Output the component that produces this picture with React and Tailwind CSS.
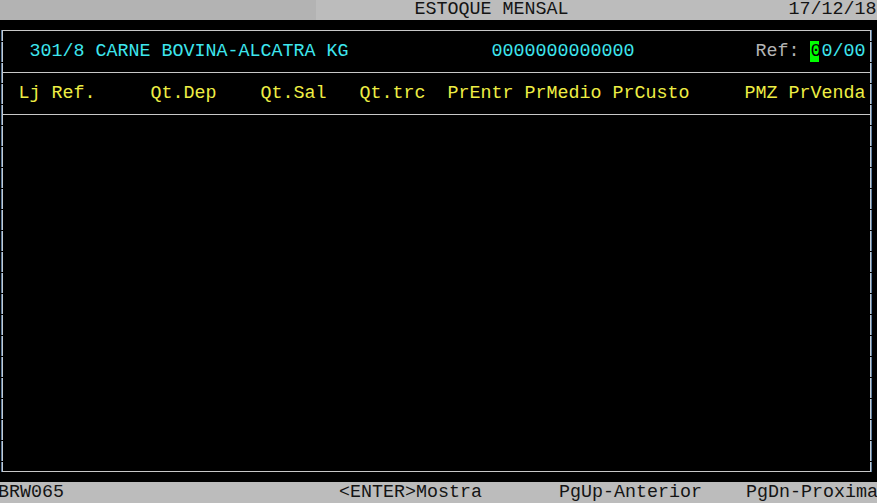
import React from "react";

// one terminal text row: parts are [column, text, className]
function Line({ parts, className = "" }) {
  let pos = 0;
  const out = [];
  parts.forEach(([col, text, cls], i) => {
    if (col > pos) out.push(" ".repeat(col - pos));
    out.push(
      <span key={i} className={cls}>
        {text}
      </span>
    );
    pos = col + text.length;
  });
  return <div className={`whitespace-pre h-[21px] leading-[21px] ${className}`}>{out}</div>;
}

const cyan = "text-[#3ee6ee]";
const yellow = "text-[#eeee44]";

const headers = [
  [2, "Lj Ref."],
  [14, "Qt.Dep"],
  [24, "Qt.Sal"],
  [33, "Qt.trc"],
  [41, "PrEntr"],
  [48, "PrMedio"],
  [56, "PrCusto"],
  [68, "PMZ"],
  [72, "PrVenda"],
];

export default function App() {
  return (
    <div className="h-[503px] w-[877px] overflow-hidden bg-black font-['Liberation_Mono','Courier_New',monospace] text-[18.33px]">
      {/* title bar */}
      <div className="h-[20px] bg-[linear-gradient(to_right,#b3b3b3_316px,#bcbcbc_316px)] text-[#141414] overflow-hidden">
        <Line
          className="-mt-[1px] -ml-[3.5px]"
          parts={[
            [38, "ESTOQUE MENSAL"],
            [72, "17/12/18"],
          ]}
        />
      </div>

      {/* main area */}
      <div className="h-[462px] pt-[10px]">
        <div className="ml-[1px] w-[871px] h-[442px] flex">
          <div className="w-[2px] bg-[linear-gradient(to_right,#5d7b9b_1px,#c4ccd4_1px)]">
            <div className="h-full bg-[image:repeating-linear-gradient(to_bottom,transparent_0px,transparent_11px,#000_11px,#000_12px,transparent_12px,transparent_21px)]" />
          </div>
          <div className="flex-1 flex flex-col border-t border-b border-[#c8c8c8] overflow-hidden">
            <Line
              className="mt-[10px] -ml-[6.5px]"
              parts={[
                [3, "301/8 CARNE BOVINA-ALCATRA KG", cyan],
                [45, "0000000000000", cyan],
                [69, "Ref: ", "text-[#b4b4b4]"],
                [74, "0", "text-black bg-[linear-gradient(to_right,transparent_0.5px,#00ff00_0.5px,#00ff00_9px,transparent_9px)]"],
                [75, "0/00", cyan],
              ]}
            />
            <div className="mt-[10px] h-px bg-[#c8c8c8]" />
            <Line
              className="mt-[10px] -ml-[6.5px]"
              parts={headers.map(([c, t]) => [c, t, yellow])}
            />
            <div className="mt-[10px] h-px bg-[#c8c8c8]" />
            <div className="flex-1" />
          </div>
          <div className="w-[2px] bg-[linear-gradient(to_right,#c4ccd4_1px,#5d7b9b_1px)]">
            <div className="h-full bg-[image:repeating-linear-gradient(to_bottom,transparent_0px,transparent_11px,#000_11px,#000_12px,transparent_12px,transparent_21px)]" />
          </div>
        </div>
      </div>

      {/* status bar */}
      <div className="h-[21px] bg-[#bcbcbc] text-[#141414] overflow-hidden">
        <Line
          className="-ml-[2px]"
          parts={[
            [0, "BRW065"],
            [31, "<ENTER>Mostra"],
            [51, "PgUp-Anterior"],
            [68, "PgDn-Proxima"],
          ]}
        />
      </div>
    </div>
  );
}
